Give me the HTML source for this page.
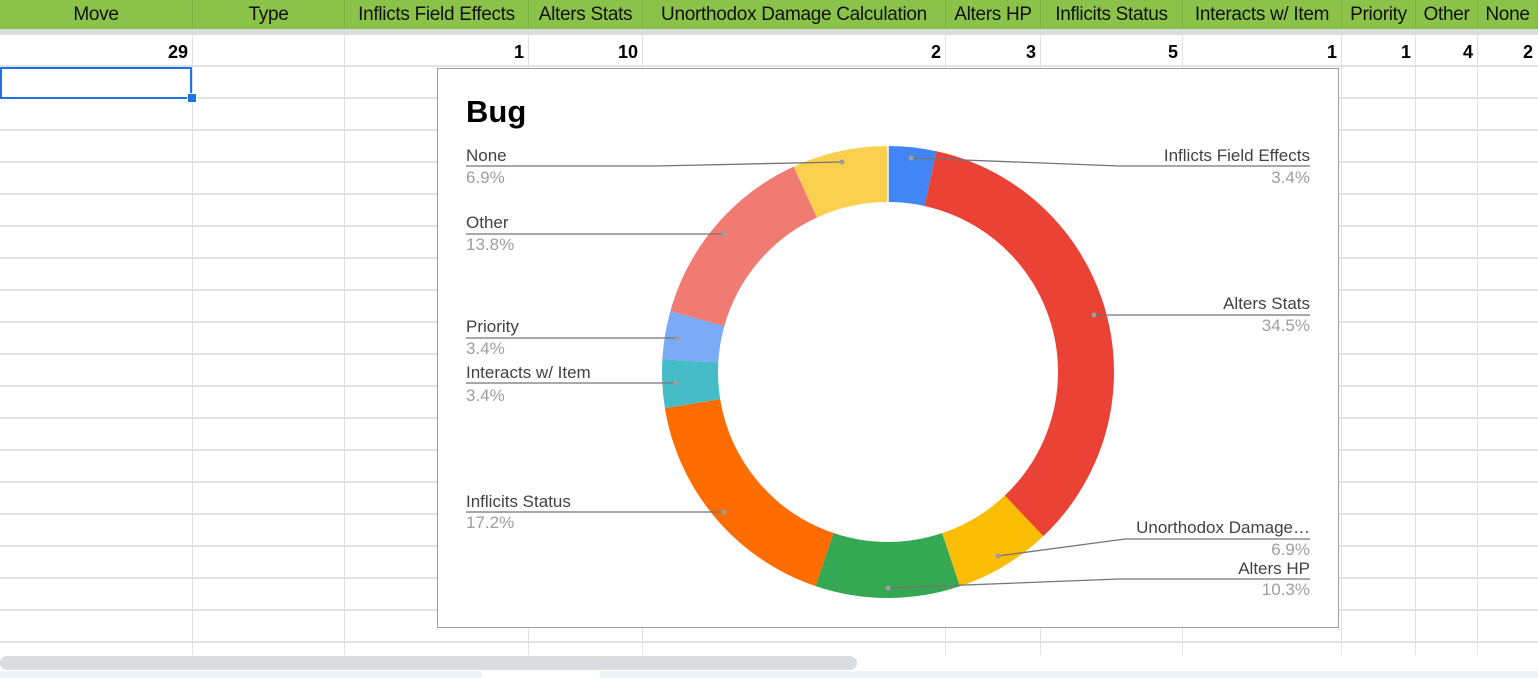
<!DOCTYPE html><html><head><style>
body{margin:0;width:1538px;height:678px;overflow:hidden;background:#fff;font-family:"Liberation Sans",Arial,sans-serif;position:relative}
.hdr{position:absolute;left:0;top:0;width:1538px;height:29px;background:#8bc34a}
.band{position:absolute;left:0;top:29px;width:1538px;height:6px;background:#dadce0}
.h{position:absolute;top:0;height:29px;line-height:30px;font-size:19px;color:#111;text-align:center;border-right:1px solid #7cb342;box-sizing:border-box;white-space:nowrap;overflow:hidden;letter-spacing:-0.3px}
.v{position:absolute;top:35px;height:31px;line-height:34px;font-size:18px;font-weight:bold;text-align:right;padding-right:5px;box-sizing:border-box}
.vl{position:absolute;top:35px;width:1px;height:620px;background:#e2e2e2}
.hl{position:absolute;left:0;width:1538px;height:2px;background:#e2e2e2}
</style></head><body>
<div class="hdr"></div><div class="band"></div>
<div class="h" style="left:0;width:193px">Move</div>
<div class="h" style="left:193px;width:152px">Type</div>
<div class="h" style="left:345px;width:184px">Inflicts Field Effects</div>
<div class="h" style="left:529px;width:114px">Alters Stats</div>
<div class="h" style="left:643px;width:303px">Unorthodox Damage Calculation</div>
<div class="h" style="left:946px;width:95px">Alters HP</div>
<div class="h" style="left:1041px;width:142px">Inflicits Status</div>
<div class="h" style="left:1183px;width:159px">Interacts w/ Item</div>
<div class="h" style="left:1342px;width:74px">Priority</div>
<div class="h" style="left:1416px;width:62px">Other</div>
<div class="h" style="left:1478px;width:60px">None</div>
<div class="vl" style="left:192px"></div><div class="vl" style="left:344px"></div><div class="vl" style="left:528px"></div><div class="vl" style="left:642px"></div><div class="vl" style="left:945px"></div><div class="vl" style="left:1040px"></div><div class="vl" style="left:1182px"></div><div class="vl" style="left:1341px"></div><div class="vl" style="left:1415px"></div><div class="vl" style="left:1477px"></div>
<div class="hl" style="top:65px"></div><div class="hl" style="top:97px"></div><div class="hl" style="top:129px"></div><div class="hl" style="top:161px"></div><div class="hl" style="top:193px"></div><div class="hl" style="top:225px"></div><div class="hl" style="top:257px"></div><div class="hl" style="top:289px"></div><div class="hl" style="top:321px"></div><div class="hl" style="top:353px"></div><div class="hl" style="top:385px"></div><div class="hl" style="top:417px"></div><div class="hl" style="top:449px"></div><div class="hl" style="top:481px"></div><div class="hl" style="top:513px"></div><div class="hl" style="top:545px"></div><div class="hl" style="top:577px"></div><div class="hl" style="top:609px"></div><div class="hl" style="top:641px"></div>
<div class="v" style="left:0;width:193px">29</div>
<div class="v" style="left:345px;width:184px">1</div>
<div class="v" style="left:529px;width:114px">10</div>
<div class="v" style="left:643px;width:303px">2</div>
<div class="v" style="left:946px;width:95px">3</div>
<div class="v" style="left:1041px;width:142px">5</div>
<div class="v" style="left:1183px;width:159px">1</div>
<div class="v" style="left:1342px;width:74px">1</div>
<div class="v" style="left:1416px;width:62px">4</div>
<div class="v" style="left:1478px;width:60px">2</div>
<div style="position:absolute;left:0;top:67px;border:2px solid #1a73e8;box-sizing:border-box;width:192px;height:32px"></div>
<div style="position:absolute;left:187px;top:93px;width:8px;height:8px;background:#1a73e8;border:1px solid #fff"></div>
<div style="position:absolute;left:0;top:655px;width:1538px;height:23px;background:#fff"></div>
<div style="position:absolute;left:0;top:656px;width:857px;height:14px;border-radius:7px;background:#dadce0"></div>
<div style="position:absolute;left:0;top:671px;width:1538px;height:7px;background:#f1f3f4"></div>
<div style="position:absolute;left:482px;top:671px;width:118px;height:7px;background:#fff"></div>
<svg style="position:absolute;left:0;top:0" width="1538" height="678">
<rect x="437.5" y="68.5" width="901" height="559" fill="#fff" stroke="#9e9e9e"/>
<text x="466" y="122" font-size="31" font-weight="bold" font-family="Liberation Sans,Arial,sans-serif">Bug</text>
<g transform="rotate(-90 888 372)" fill="none" stroke-width="56">
<circle cx="888" cy="372" r="198" stroke="#4285f4" stroke-dasharray="42.9 2000" stroke-dashoffset="0"/>
<circle cx="888" cy="372" r="198" stroke="#ea4335" stroke-dasharray="429 2000" stroke-dashoffset="-42.9"/>
<circle cx="888" cy="372" r="198" stroke="#fbbc04" stroke-dasharray="85.8 2000" stroke-dashoffset="-471.9"/>
<circle cx="888" cy="372" r="198" stroke="#34a853" stroke-dasharray="128.7 2000" stroke-dashoffset="-557.7"/>
<circle cx="888" cy="372" r="198" stroke="#ff6d01" stroke-dasharray="214.5 2000" stroke-dashoffset="-686.4"/>
<circle cx="888" cy="372" r="198" stroke="#46bdc6" stroke-dasharray="42.9 2000" stroke-dashoffset="-900.9"/>
<circle cx="888" cy="372" r="198" stroke="#7baaf7" stroke-dasharray="42.9 2000" stroke-dashoffset="-943.8"/>
<circle cx="888" cy="372" r="198" stroke="#f07b72" stroke-dasharray="171.6 2000" stroke-dashoffset="-986.7"/>
<circle cx="888" cy="372" r="198" stroke="#fcd04f" stroke-dasharray="85.9 2000" stroke-dashoffset="-1158.3"/>
</g>
<g stroke="#fff" stroke-width="1.5">
<line x1="888" y1="146" x2="888" y2="202"/>
</g>
<g stroke="#757575" stroke-width="1.3" fill="none">
<polyline points="842,162 655,166 466,166"/>
<polyline points="724,234 466,234"/>
<polyline points="677,338 466,338"/>
<polyline points="676,383 466,383"/>
<polyline points="724,512 466,512"/>
<polyline points="911,158 1120,166 1310,166"/>
<polyline points="1094,315 1310,315"/>
<polyline points="998,556 1125,539 1310,539"/>
<polyline points="888,588 1120,579 1310,579"/>
</g>
<g fill="#9e9e9e">
<circle cx="842" cy="162" r="2.5"/><circle cx="724" cy="234" r="2.5"/><circle cx="677" cy="338" r="2.5"/><circle cx="676" cy="383" r="2.5"/><circle cx="724" cy="512" r="2.5"/><circle cx="911" cy="158" r="2.5"/><circle cx="1094" cy="315" r="2.5"/><circle cx="998" cy="556" r="2.5"/><circle cx="888" cy="588" r="2.5"/>
</g>
<g font-size="17" font-family="Liberation Sans,Arial,sans-serif">
<g fill="#424242">
<text x="466" y="161">None</text><text x="466" y="228">Other</text><text x="466" y="332">Priority</text><text x="466" y="378">Interacts w/ Item</text><text x="466" y="507">Inflicits Status</text>
<text x="1310" y="161" text-anchor="end">Inflicts Field Effects</text><text x="1310" y="309" text-anchor="end">Alters Stats</text><text x="1310" y="533" text-anchor="end">Unorthodox Damage…</text><text x="1310" y="574" text-anchor="end">Alters HP</text>
</g>
<g fill="#9e9e9e">
<text x="466" y="183">6.9%</text><text x="466" y="250">13.8%</text><text x="466" y="354">3.4%</text><text x="466" y="401">3.4%</text><text x="466" y="528">17.2%</text>
<text x="1310" y="183" text-anchor="end">3.4%</text><text x="1310" y="331" text-anchor="end">34.5%</text><text x="1310" y="555" text-anchor="end">6.9%</text><text x="1310" y="595" text-anchor="end">10.3%</text>
</g></g>
</svg>
</body></html>
